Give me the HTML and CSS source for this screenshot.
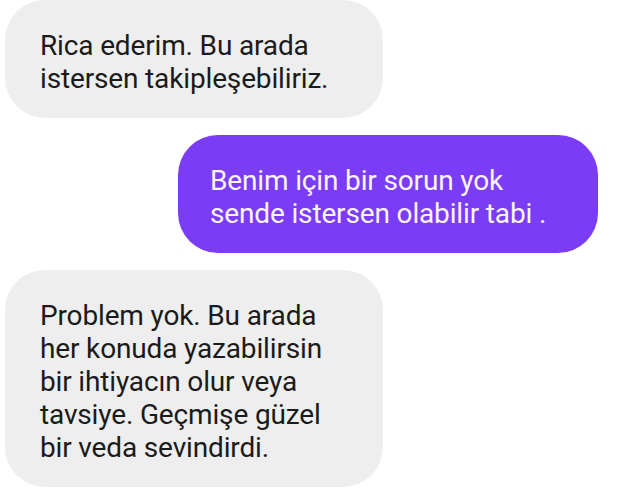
FILE: index.html
```html
<!DOCTYPE html>
<html lang="tr">
<head>
<meta charset="utf-8">
<title>Sohbet</title>
<link rel="stylesheet" href="styles.css">
</head>
<body>
<div class="thread">
  <div class="bubble incoming short">
    <p>Rica ederim. Bu arada<br>istersen takipleşebiliriz.</p>
  </div>
  <div class="bubble outgoing">
    <p>Benim için bir sorun yok<br>sende istersen olabilir tabi .</p>
  </div>
  <div class="bubble incoming">
    <p>Problem yok. Bu arada<br>her konuda yazabilirsin<br>bir ihtiyacın olur veya<br>tavsiye. Geçmişe güzel<br>bir veda sevindirdi.</p>
  </div>
</div>
</body>
</html>
```

FILE: styles.css
```css
html, body {
  margin: 0;
  padding: 0;
  background: #ffffff;
}

.thread {
  display: flex;
  flex-direction: column;
  gap: 17px;
  width: 627px;
  height: 489px;
  overflow: hidden;
  font-family: Roboto, "Noto Sans", sans-serif;
}

.bubble {
  box-sizing: border-box;
  border-radius: 40px;
  padding: 29px 0 23px 35px;
}

.bubble p {
  margin: 0;
  font-size: 28px;
  line-height: 33px;
  letter-spacing: -0.15px;
}

.incoming {
  align-self: flex-start;
  margin-left: 5px;
  width: 378px;
  background: #eeeeee;
  color: #1b1b1b;
}

.outgoing {
  align-self: flex-start;
  margin-left: 178px;
  width: 420px;
  padding-left: 32px;
  background: #7a3cf4;
  color: #fbf3ff;
}
```
